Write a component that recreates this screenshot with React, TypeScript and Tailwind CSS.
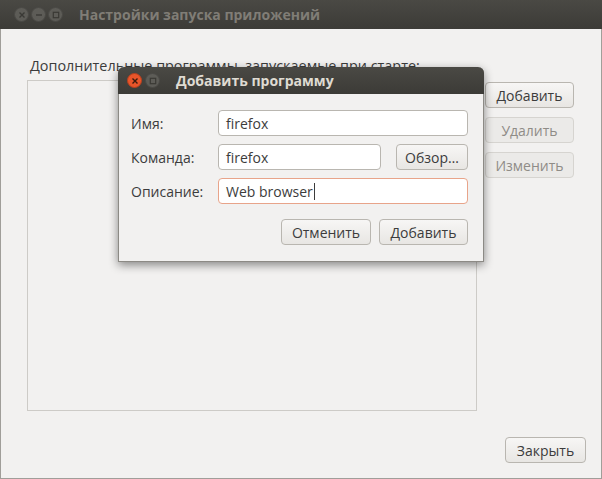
import React from 'react';

const font = { fontFamily: '"Open Sans", "DejaVu Sans", sans-serif' };

function TitleButton({ kind, active }: { kind: 'close' | 'min' | 'max'; active?: boolean }) {
  const bg = active && kind === 'close' ? 'bg-[#e9552a] border-[#b8401e]' : 'bg-[#5d5c57] border-[#4a4945]';
  const fg = active && kind === 'close' ? '#3c1a0e' : '#3a3935';
  return (
    <div className={`w-[15px] h-[15px] rounded-full border flex items-center justify-center ${bg}`}>
      <svg width="8" height="8" viewBox="0 0 8 8">
        {kind === 'close' && <path d="M1.5 1.5 L6.5 6.5 M6.5 1.5 L1.5 6.5" stroke={fg} strokeWidth="1.4" />}
        {kind === 'min' && <path d="M1 4 H7" stroke={fg} strokeWidth="1.4" />}
        {kind === 'max' && <rect x="1.3" y="1.3" width="5.4" height="5.4" fill="none" stroke={fg} strokeWidth="1.2" />}
      </svg>
    </div>
  );
}

function Button({ label, disabled, className = '' }: { label: string; disabled?: boolean; className?: string }) {
  return (
    <div
      className={`h-[26px] rounded-[4px] border flex items-center justify-center text-[14px] ${
        disabled
          ? 'border-[#d6d4d0] bg-[#ebeae8] text-[#8f8c87]'
          : 'border-[#b9b6b0] bg-gradient-to-b from-[#f7f6f5] to-[#e8e6e3] text-[#3c3c3c]'
      } ${className}`}
    >
      {label}
    </div>
  );
}

function Field({ value, focused, className = '' }: { value: string; focused?: boolean; className?: string }) {
  return (
    <div
      className={`h-[26px] rounded-[4px] border bg-white flex items-center px-[7px] text-[14px] text-[#3c3c3c] ${
        focused ? 'border-[#e8a48a]' : 'border-[#b9b6b0]'
      } ${className}`}
    >
      {value}
      {focused && <span className="w-px h-[17px] bg-[#3c3c3c] ml-px" />}
    </div>
  );
}

export default function App() {
  return (
    <div className="relative w-[602px] h-[479px] overflow-hidden bg-[#f2f1f0]" style={font}>
      {/* main window */}
      <div className="w-[602px] h-[479px] flex flex-col border-x border-b border-[#a09e99]">
        <div className="h-[29px] bg-gradient-to-b from-[#4a4944] to-[#3c3b37] flex items-center pl-[14px] gap-[2px] -mx-px">
          <TitleButton kind="close" />
          <TitleButton kind="min" />
          <TitleButton kind="max" />
          <span className="ml-[14px] text-[14px] font-bold text-[#807d76]">Настройки запуска приложений</span>
        </div>
        <div className="flex-1 flex flex-col px-[26px] pt-[28px] pb-[15px]">
          <div className="text-[14.4px] text-[#3c3c3c] pl-[3px] leading-[18px]">
            Дополнительные программы, запускаемые при старте:
          </div>
          <div className="flex gap-[8px] mt-[-13px]">
            <div className="w-[450px] h-[331px] mt-[18px] border border-[#cdcbc7] bg-[#f2f1f0]" />
            <div className="flex flex-col gap-[9px] mt-[20px]">
              <Button label="Добавить" className="w-[89px]" />
              <Button label="Удалить" disabled className="w-[89px]" />
              <Button label="Изменить" disabled className="w-[89px]" />
            </div>
          </div>
          <div className="flex-1" />
          <div className="flex justify-end -mr-[11px]">
            <Button label="Закрыть" className="w-[81px]" />
          </div>
        </div>
      </div>

      {/* add program dialog */}
      <div className="absolute left-[118px] top-[67px] w-[366px] h-[195px] rounded-t-[6px] bg-[#f2f1f0] shadow-[0_3px_10px_rgba(0,0,0,0.45)] flex flex-col border border-[#8c8a85] border-t-0">
        <div className="h-[27px] rounded-t-[6px] bg-gradient-to-b from-[#4a4944] to-[#3c3b37] flex items-center pl-[9px] gap-[3px] -mx-px">
          <TitleButton kind="close" active />
          <TitleButton kind="max" />
          <span className="ml-[13px] text-[14px] font-bold text-[#dfdbd2]">Добавить программу</span>
        </div>
        <div className="flex flex-col pl-[12px] pr-[15px] pt-[16px]">
          <div className="grid grid-cols-[87px_1fr] gap-y-[8px] items-center">
            <span className="text-[14px] text-[#3c3c3c]">Имя:</span>
            <Field value="firefox" />
            <span className="text-[14px] text-[#3c3c3c]">Команда:</span>
            <div className="flex gap-[15px]">
              <Field value="firefox" className="flex-1" />
              <Button label="Обзор…" className="w-[72px]" />
            </div>
            <span className="text-[14px] text-[#3c3c3c]">Описание:</span>
            <Field value="Web browser" focused />
          </div>
          <div className="flex justify-end gap-[8px] mt-[15px]">
            <Button label="Отменить" className="w-[90px]" />
            <Button label="Добавить" className="w-[89px]" />
          </div>
        </div>
      </div>
    </div>
  );
}
